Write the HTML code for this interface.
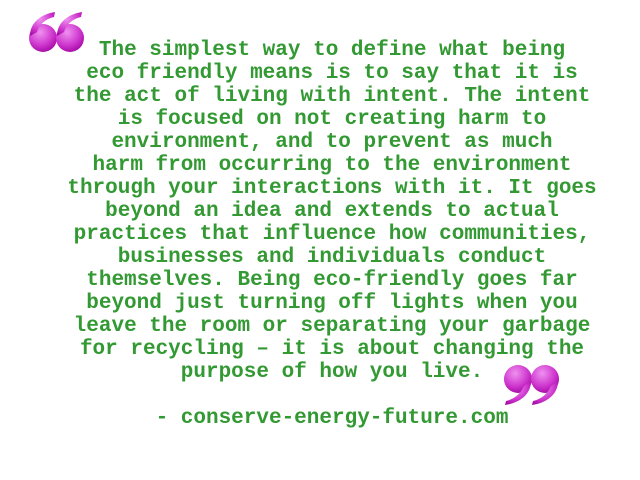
<!DOCTYPE html>
<html><head><style>
html,body{margin:0;padding:0;background:#fff;width:640px;height:480px;overflow:hidden}
.t{position:absolute;left:24px;top:39px;width:616px;text-align:center;font-family:"Liberation Mono",monospace;font-weight:bold;font-size:21px;line-height:23px;color:#339933;white-space:pre}
svg{position:absolute}
</style></head><body>
<svg width="640" height="480" style="left:0;top:0">
<defs>
<radialGradient id="g" cx="0.4" cy="0.3" r="0.8">
<stop offset="0" stop-color="#f090f0"/><stop offset="0.6" stop-color="#cc33cc"/><stop offset="1" stop-color="#990099"/>
</radialGradient>
</defs>
<g fill="url(#g)">
<circle cx="43" cy="38" r="14"/>
<path d="M30 36 C30 22 42 14 55 12 L54 17 C45 19 39 25 37 32 Z"/>
<circle cx="70" cy="38" r="14"/>
<path d="M57 36 C57 22 69 14 82 12 L81 17 C72 19 66 25 64 32 Z"/>
<circle cx="518" cy="379" r="14"/>
<path d="M531 381 C531 395 519 403 505 405 L506 401 C515 399 521 393 524 386 Z"/>
<circle cx="545" cy="379" r="14"/>
<path d="M558 381 C558 395 546 403 532 405 L533 401 C542 399 548 393 551 386 Z"/>
</g>
</svg>
<div class="t">The simplest way to define what being
eco friendly means is to say that it is
the act of living with intent. The intent
is focused on not creating harm to
environment, and to prevent as much
harm from occurring to the environment
through your interactions with it. It goes
beyond an idea and extends to actual
practices that influence how communities,
businesses and individuals conduct
themselves. Being eco-friendly goes far
beyond just turning off lights when you
leave the room or separating your garbage
for recycling – it is about changing the
purpose of how you live.

- conserve-energy-future.com</div>
</body></html>
